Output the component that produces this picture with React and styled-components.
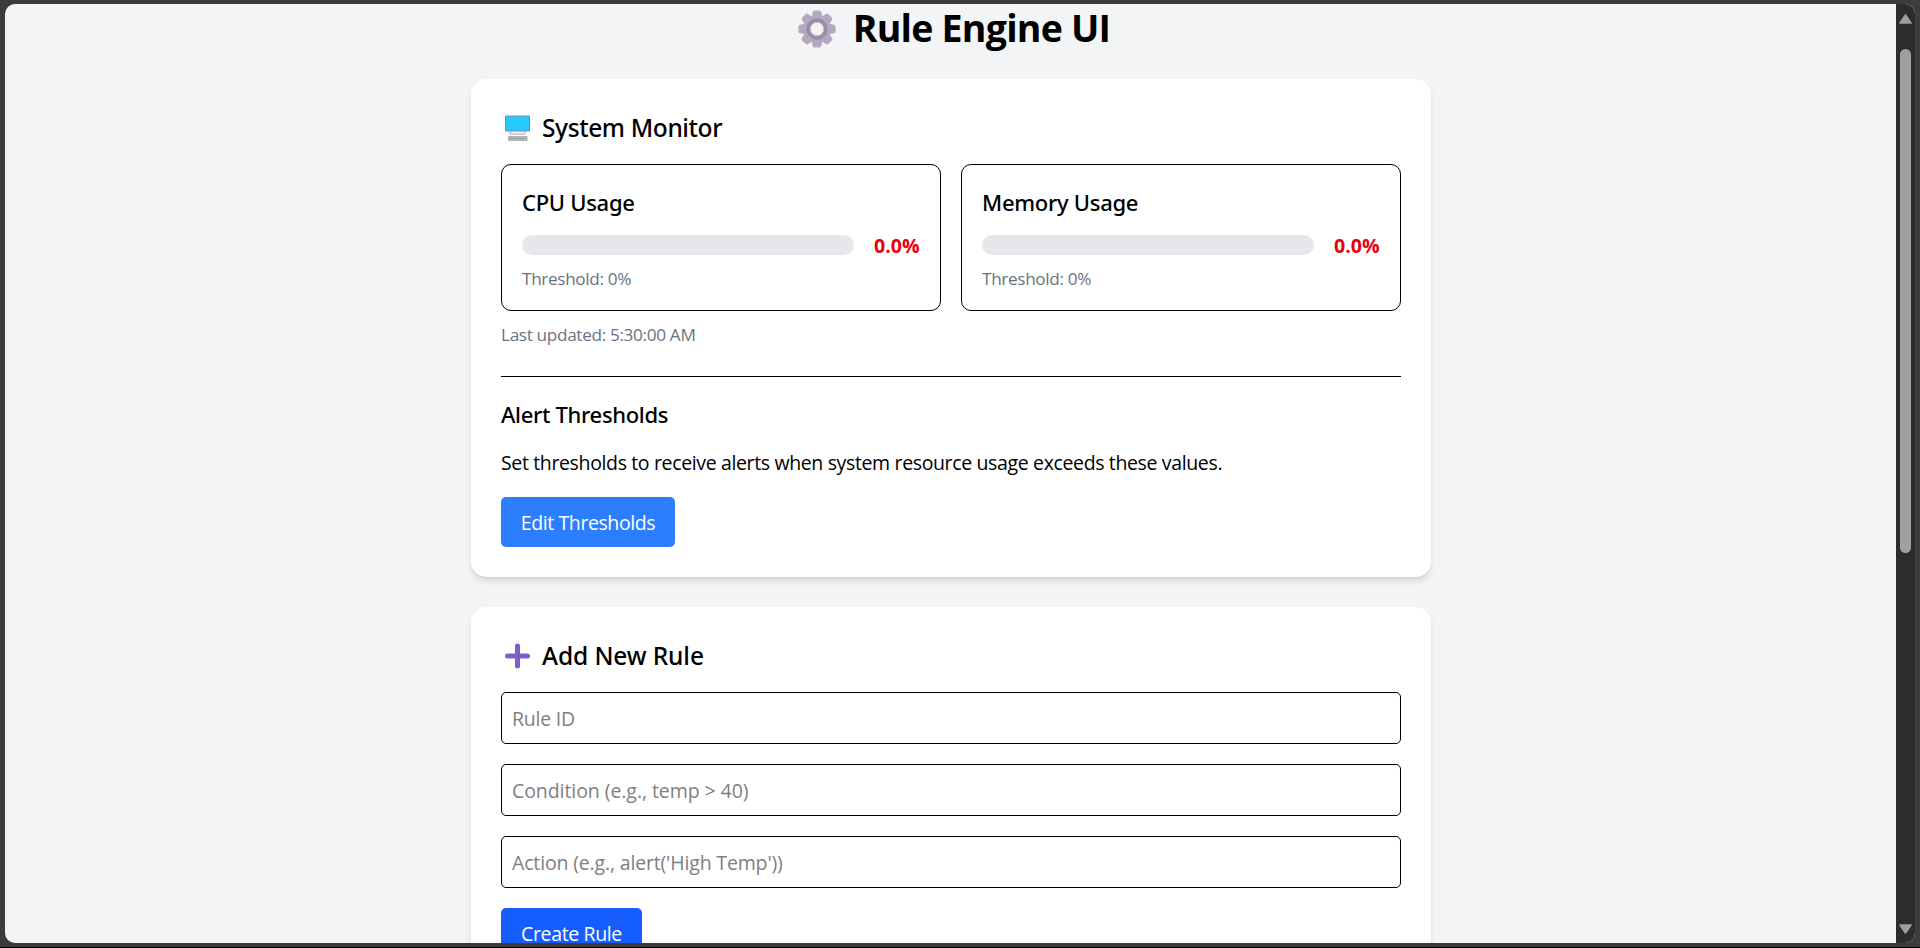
import React from "react";
import styled, { createGlobalStyle } from "styled-components";

const GlobalStyle = createGlobalStyle`
  *, *::before, *::after { box-sizing: border-box; }
  html, body { margin: 0; padding: 0; overflow: hidden; }
  h1, h2, h3, p { margin: 0; }
  body { font-family: "Open Sans", "Noto Sans", sans-serif; color: #000; }
`;

const Frame = styled.div`
  width: 100vw;
  height: 948px;
  padding: 4px 5px 4px;
  background: #3c3c3c;
  border-bottom: 1px solid #000;
`;

const Viewport = styled.div`
  display: flex;
  height: 939px;
  overflow: hidden;
  border-radius: 10px;
  background: #f3f4f6;
`;

const Page = styled.main`
  flex: 1;
  display: flex;
  flex-direction: column;
  align-items: center;
  gap: 30px;
  padding-left: 1px;
  overflow: hidden;
`;

const Scrollbar = styled.div`
  width: 19px;
  flex-shrink: 0;
  display: flex;
  flex-direction: column;
  align-items: center;
  padding: 10px 0 9px;
  background: #2c2c2c;
`;

const ScrollArrow = styled.svg`
  display: block;
  width: 13px;
  height: 10px;
  flex-shrink: 0;
  fill: #9f9f9f;
  stroke: #9f9f9f;
  stroke-width: 1.6;
  stroke-linejoin: round;
`;

const ScrollThumb = styled.div`
  width: 11px;
  height: 504px;
  margin: 25px 0 auto;
  border-radius: 6px;
  background: #9f9f9f;
`;

const Title = styled.h1`
  display: flex;
  align-items: center;
  gap: 17px;
  flex-shrink: 0;
  height: 45px;
  padding: 2px 0 0 6px;
  font-size: 37.5px;
  font-weight: 700;
  line-height: 43px;
  letter-spacing: -0.77px;
`;

const TitleIcon = styled.svg`
  width: 38px;
  height: 38px;
  margin-top: 2px;
`;

const Card = styled.section`
  width: 960px;
  flex-shrink: 0;
  padding: 30px;
  border-radius: 15px;
  background: #fff;
  box-shadow: 0 5px 7.5px -1px rgba(0, 0, 0, 0.1), 0 2.5px 5px -2.5px rgba(0, 0, 0, 0.1);
`;

const CardTitle = styled.h2`
  display: flex;
  align-items: center;
  gap: 12px;
  height: 35px;
  margin-bottom: 20px;
  padding: 2px 0 0 4px;
  font: 500 24.5px/33px "Noto Sans", sans-serif;
  letter-spacing: ${(p) => p.$track}px;
`;

const CardIcon = styled.svg`
  width: 25px;
  height: 26px;
  flex-shrink: 0;
`;

const MeterGrid = styled.div`
  display: grid;
  grid-template-columns: 1fr 1fr;
  gap: 20px;
`;

const MeterBox = styled.div`
  height: 147px;
  padding: 20px;
  border: 1px solid #000;
  border-radius: 10px;
`;

const Subheading = styled.h3`
  font: 500 22px/35px "Noto Sans", sans-serif;
  letter-spacing: ${(p) => p.$track}px;
`;

const MeterRow = styled.div`
  display: flex;
  align-items: center;
  gap: 20px;
  height: 30px;
  margin-top: 10px;
`;

const Bar = styled.div`
  flex: 1;
  height: 20px;
  border-radius: 10px;
  background: #e5e7eb;
`;

const MeterValue = styled.span`
  width: 46px;
  padding-top: 2px;
  color: #e7000b;
  font-size: 19.6px;
  font-weight: 700;
  line-height: 28px;
`;

const Note = styled.p`
  height: 25px;
  margin-top: ${(p) => p.$gap}px;
  color: #6a7282;
  font-size: 17.2px;
  line-height: 27px;
  letter-spacing: -0.34px;
`;

const Thresholds = styled.div`
  margin-top: 30px;
  padding-top: 20px;
  border-top: 1px solid #000;
`;

const Description = styled.p`
  height: 30px;
  margin: 15px 0 20px;
  font-size: 19.5px;
  line-height: 32px;
  letter-spacing: -0.36px;
`;

const Button = styled.button`
  display: block;
  width: ${(p) => p.$width}px;
  height: 50px;
  padding: 2px 0 0;
  border: 0;
  border-radius: 5px;
  background: ${(p) => p.$color};
  color: #fff;
  font: 400 19.5px/30px "Open Sans", sans-serif;
  letter-spacing: ${(p) => p.$track}px;
`;

const Form = styled.form`
  display: flex;
  flex-direction: column;
  gap: 20px;
`;

const Field = styled.input`
  display: block;
  width: 100%;
  height: 52px;
  padding: 0 10px;
  border: 1px solid #000;
  border-radius: 5px;
  background: #fff;
  font: 400 19.5px/30px "Open Sans", sans-serif;
  letter-spacing: ${(p) => p.$track}px;
  &::placeholder { color: #808080; opacity: 1; }
`;

const teeth = [0, 45, 90, 135, 180, 225, 270, 315];

const Gear = () => (
  <TitleIcon viewBox="-19 -19 38 38">
    {teeth.map((a) => (
      <path
        key={a}
        d="M-5.6 -11L-4.3 -17Q-3.9 -18.6 -2.4 -18.6H2.4Q3.9 -18.6 4.3 -17L5.6 -11Z"
        fill="#b4a9bf"
        transform={`rotate(${a})`}
      />
    ))}
    <circle r="13.4" fill="#b4a9bf" />
    <circle r="8.7" fill="#f3f4f6" stroke="#998ca6" strokeWidth="4" />
    <circle r="6.7" fill="#f3f4f6" stroke="#c5bccd" strokeWidth="1" />
  </TitleIcon>
);

const Computer = () => (
  <CardIcon viewBox="0 0 25 26">
    <path d="M5 16.5V18.2Q5 19.2 6.2 19.2H18.8Q20 19.2 20 18.2V16.5" fill="#f3f3f6" stroke="#b5b5bb" strokeWidth="1.2" />
    <rect x="0" y="0.5" width="25" height="16" rx="0.8" fill="#8380b5" />
    <rect x="0" y="0.3" width="25" height="0.9" fill="#c6c2d6" />
    <rect x="1" y="1.5" width="23" height="14" fill="#26c9fc" />
    <rect x="3" y="21" width="19.5" height="5" rx="0.5" fill="#b4b4b4" />
    <path d="M5 23.5H20.5" stroke="#999" strokeWidth="1" strokeDasharray="2 1" />
  </CardIcon>
);

const Plus = () => (
  <CardIcon viewBox="0 0 25 26">
    <path d="M12.5 3V23M2.5 13H22.5" stroke="#7d5fc9" strokeWidth="5" strokeLinecap="round" />
  </CardIcon>
);

const Meter = ({ label }) => (
  <MeterBox>
    <Subheading $track={-0.28}>{label}</Subheading>
    <MeterRow>
      <Bar />
      <MeterValue>0.0%</MeterValue>
    </MeterRow>
    <Note $gap={5}>Threshold: 0%</Note>
  </MeterBox>
);

export default function App() {
  return (
    <Frame>
      <GlobalStyle />
      <Viewport>
        <Page>
          <Title>
            <Gear />
            Rule Engine UI
          </Title>
          <Card>
            <CardTitle $track={-0.38}>
              <Computer />
              System Monitor
            </CardTitle>
            <MeterGrid>
              <Meter label="CPU Usage" />
              <Meter label="Memory Usage" />
            </MeterGrid>
            <Note $gap={10}>Last updated: 5:30:00 AM</Note>
            <Thresholds>
              <Subheading $track={-0.32}>Alert Thresholds</Subheading>
              <Description>
                Set thresholds to receive alerts when system resource usage exceeds these values.
              </Description>
              <Button $width={174} $color="#2b7fff" $track={-0.41}>
                Edit Thresholds
              </Button>
            </Thresholds>
          </Card>
          <Card>
            <CardTitle $track={-0.1}>
              <Plus />
              Add New Rule
            </CardTitle>
            <Form>
              <Field $track={-0.22} placeholder="Rule ID" />
              <Field $track={-0.07} placeholder="Condition (e.g., temp > 40)" />
              <Field $track={-0.16} placeholder="Action (e.g., alert('High Temp'))" />
              <Button type="button" $width={141} $color="#155dfc" $track={-0.36}>
                Create Rule
              </Button>
            </Form>
          </Card>
        </Page>
        <Scrollbar>
          <ScrollArrow viewBox="0 0 13 10">
            <path d="M6.5 1L12 9H1Z" />
          </ScrollArrow>
          <ScrollThumb />
          <ScrollArrow viewBox="0 0 13 10">
            <path d="M6.5 9L12 1H1Z" />
          </ScrollArrow>
        </Scrollbar>
      </Viewport>
    </Frame>
  );
}
